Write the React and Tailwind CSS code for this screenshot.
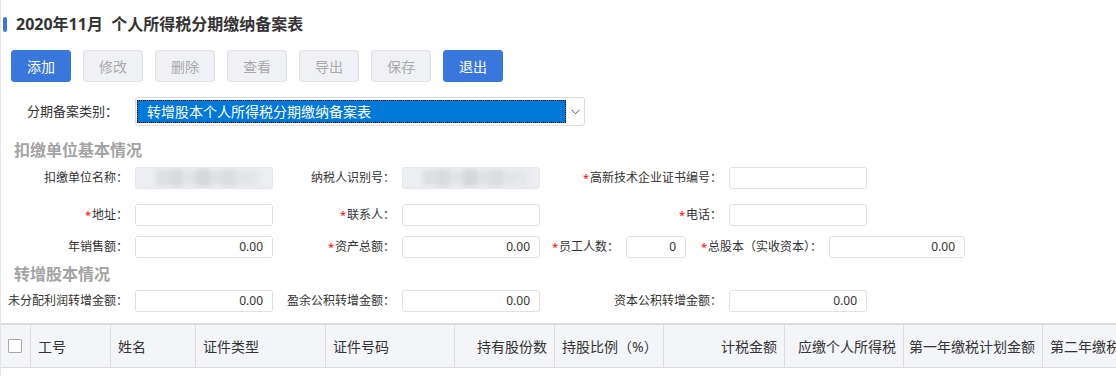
import React from "react";

const FONT = { fontFamily: '"Noto Sans", "Noto Sans CJK SC", sans-serif' };

function Btn({ children, primary }) {
  return (
    <div
      className={
        "w-[60px] h-[32px] rounded-[3px] flex items-center justify-center text-[14px] border " +
        (primary
          ? "bg-[#3a77dc] border-[#3a77dc] text-white"
          : "bg-[#f0f1f5] border-[#e0e2e8] text-[#a9a9a9]")
      }
    >
      {children}
    </div>
  );
}

function Label({ w, req, children }) {
  return (
    <div
      className="flex items-center justify-end text-[12px] text-[#333] whitespace-nowrap pr-[7px]"
      style={{ width: w }}
    >
      {req && <span className="text-[#ff0000] text-[11px] mr-[1px]">*</span>}
      {children}
    </div>
  );
}

function Input({ w, value, blur }) {
  return (
    <div
      className={
        "h-[22px] rounded-[3px] border flex items-center justify-end pr-[9px] text-[12px] text-[#333] relative overflow-hidden " +
        (blur ? "bg-[#eceef1] border-[#e6e7ea]" : "bg-white border-[#dfe1e6]")
      }
      style={{ width: w }}
    >
      {blur && (
        <div className="absolute inset-0 flex items-center pl-[20px] gap-0 blur-[2px]">
          <div className="w-[14px] h-[16px] bg-[#dedfe2]" />
          <div className="w-[12px] h-[18px] bg-[#d9dadd]" />
          <div className="w-[14px] h-[14px] bg-[#e2e3e6]" />
          <div className="w-[14px] h-[18px] bg-[#d6d7da]" />
          <div className="w-[12px] h-[14px] bg-[#e0e1e4]" />
          <div className="w-[14px] h-[18px] bg-[#dcdde0]" />
          <div className="w-[14px] h-[14px] bg-[#e3e4e7]" />
          <div className="w-[10px] h-[16px] bg-[#e6e7ea]" />
        </div>
      )}
      {value && <span className="relative leading-none">{value}</span>}
    </div>
  );
}

function Section({ children, className }) {
  return (
    <div
      className={
        "h-[22px] leading-[22px] pl-[13px] text-[16px] font-bold text-[#a3a3a3] " +
        (className || "")
      }
    >
      {children}
    </div>
  );
}

const cols = [
  { w: 30, t: "" },
  { w: 80, t: "工号", a: "l" },
  { w: 85, t: "姓名", a: "l" },
  { w: 130, t: "证件类型", a: "l" },
  { w: 129, t: "证件号码", a: "l" },
  { w: 100, t: "持有股份数", a: "r" },
  { w: 109, t: "持股比例（%）", a: "l" },
  { w: 121, t: "计税金额", a: "r" },
  { w: 119, t: "应缴个人所得税", a: "r" },
  { w: 139, t: "第一年缴税计划金额", a: "r" },
  { w: 150, t: "第二年缴税计划金额", a: "l" },
];

export default function App() {
  return (
    <div
      className="w-[1116px] h-[376px] overflow-hidden bg-white border-l border-[#e4e4e4] flex flex-col"
      style={FONT}
    >
      {/* title */}
      <div className="mt-[13px] h-[22px] flex items-center">
        <div className="ml-[2px] w-[4px] h-[15px] rounded-[2px] bg-[#3a77dc]" />
        <div className="ml-[9px] text-[16px] font-bold text-[#333] leading-[22px] whitespace-pre">
          2020年11月  个人所得税分期缴纳备案表
        </div>
      </div>

      {/* buttons */}
      <div className="mt-[15px] pl-[10px] flex gap-[12px]">
        <Btn primary>添加</Btn>
        <Btn>修改</Btn>
        <Btn>删除</Btn>
        <Btn>查看</Btn>
        <Btn>导出</Btn>
        <Btn>保存</Btn>
        <Btn primary>退出</Btn>
      </div>

      {/* select */}
      <div className="mt-[15px] h-[29px] flex items-center">
        <div className="w-[134px] pl-[26px] text-[13px] text-[#333] whitespace-nowrap">
          分期备案类别：
        </div>
        <div className="w-[450px] h-[29px] border border-[#dcdcdc] rounded-[3px] flex items-start pt-[2px] pl-[1px]">
          <div className="w-[429px] h-[23px] bg-[#0078d7] border border-dotted border-black flex items-center pl-[9px] text-[14px] text-white whitespace-nowrap">
            转增股本个人所得税分期缴纳备案表
          </div>
          <div className="flex-1 h-[23px] flex items-center justify-center">
            <svg width="9" height="6" viewBox="0 0 9 6" fill="none">
              <path d="M0.5 0.8 L4.5 4.8 L8.5 0.8" stroke="#555" strokeWidth="1" />
            </svg>
          </div>
        </div>
      </div>

      <Section className="mt-[13px]">扣缴单位基本情况</Section>

      {/* row 1 */}
      <div className="mt-[6px] flex h-[22px]">
        <Label w={134}>扣缴单位名称：</Label>
        <Input w={138} blur />
        <Label w={129}>纳税人识别号：</Label>
        <Input w={138} blur />
        <Label w={189} req>高新技术企业证书编号：</Label>
        <Input w={138} />
      </div>

      {/* row 2 */}
      <div className="mt-[15px] flex h-[22px]">
        <Label w={134} req>地址：</Label>
        <Input w={138} />
        <Label w={129} req>联系人：</Label>
        <Input w={138} />
        <Label w={189} req>电话：</Label>
        <Input w={138} />
      </div>

      {/* row 3 */}
      <div className="mt-[10px] flex h-[22px]">
        <Label w={134}>年销售额：</Label>
        <Input w={138} value="0.00" />
        <Label w={129} req>资产总额：</Label>
        <Input w={138} value="0.00" />
        <Label w={86} req>员工人数：</Label>
        <Input w={60} value="0" />
        <Label w={143} req>总股本（实收资本）：</Label>
        <Input w={136} value="0.00" />
      </div>

      <Section className="mt-[5px]">转增股本情况</Section>

      {/* row 4 */}
      <div className="mt-[5px] flex h-[22px]">
        <Label w={134}>未分配利润转增金额：</Label>
        <Input w={138} value="0.00" />
        <Label w={129}>盈余公积转增金额：</Label>
        <Input w={138} value="0.00" />
        <Label w={189}>资本公积转增金额：</Label>
        <Input w={138} value="0.00" />
      </div>

      {/* table header */}
      <div className="mt-[11px] border-t-2 border-b border-[#dcdcdc] bg-[#f3f5f9] h-[45px] flex overflow-hidden">
        {cols.map((c, i) => (
          <div
            key={i}
            className={
              "shrink-0 h-full flex items-center text-[14px] text-[#333] whitespace-nowrap px-[7px] " +
              (i < cols.length - 1 ? "border-r border-[#dcdcdc] " : "") +
              (c.a === "r" ? "justify-end" : "justify-start")
            }
            style={{ width: c.w }}
          >
            {i === 0 ? (
              <div className="w-[14px] h-[14px] bg-white border border-[#a8a8a8] rounded-[1px]" />
            ) : (
              c.t
            )}
          </div>
        ))}
      </div>
    </div>
  );
}
